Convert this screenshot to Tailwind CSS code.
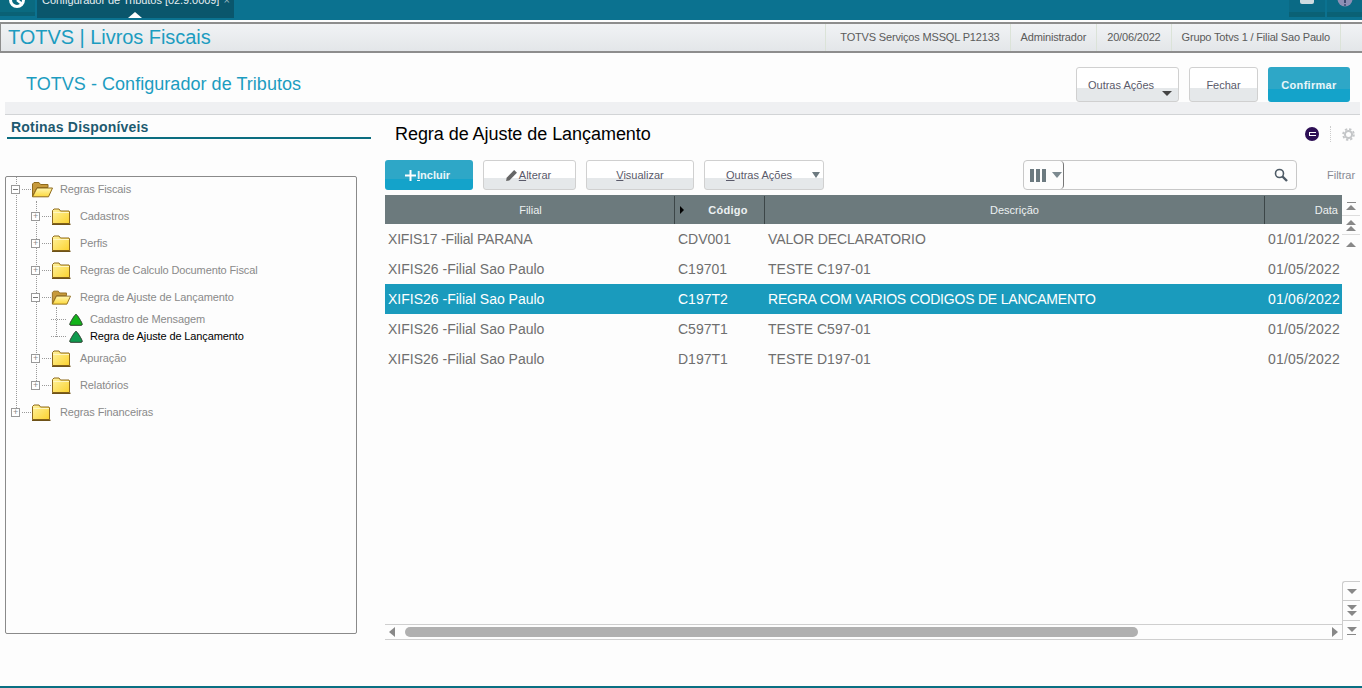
<!DOCTYPE html>
<html lang="pt-BR">
<head>
  <meta charset="UTF-8">
  <title>TOTVS | Livros Fiscais</title>
  <script src="https://cdn.jsdelivr.net/npm/@tailwindcss/browser@4"></script>
</head>
<body class="h-[688px] w-[1362px] overflow-hidden bg-[#fdfdfd] font-['Liberation_Sans',Arial,sans-serif]">
  <svg class="absolute size-0">
    <defs>
      <linearGradient id="fold" x1="0" y1="0" x2="1" y2="1">
        <stop offset="0" stop-color="#fff3a0"/><stop offset="1" stop-color="#fbd22e"/>
      </linearGradient>
      <linearGradient id="flap" x1="0" y1="0" x2="0" y2="1">
        <stop offset="0" stop-color="#fff6b0"/><stop offset="1" stop-color="#fcd83c"/>
      </linearGradient>
      <symbol id="folder-closed" viewBox="0 0 20 17">
        <path d="M1.500 15.500V2.500L3 1h5l1.500 2H18l.5 1v11.500z" fill="url(#fold)" stroke="#8f6a1c"/>
        <path d="M2 4.500H18" stroke="#fff6c0"/>
        <path d="M1 16.300H19.500" stroke="#6e5218" stroke-width="1.400"/>
      </symbol>
      <symbol id="folder-open" viewBox="0 0 22 17">
        <path d="M1.500 15.500V3L3 1.500h5L9.500 3.500H17v3H6z" fill="#c79a3c" stroke="#8f6a1c"/>
        <path d="M1.500 15.800L6 7h15.500l-4 8.800z" fill="url(#flap)" stroke="#8f6a1c"/>
      </symbol>
      <symbol id="tri" viewBox="0 0 14 13">
        <path d="M7 1.200C8 1.200 13.300 10 13.300 11.300Q13.300 12.300 12 12.300H2Q.7 12.300 .7 11.300C.7 10 6 1.200 7 1.200z" fill="currentColor" stroke="#2d3d2d" stroke-linejoin="round"/>
      </symbol>
    </defs>
  </svg>

  <!-- barra superior -->
  <div class="flex h-[20px] items-start justify-between bg-[#0b7290]">
    <div class="flex h-[18px] items-start overflow-hidden">
      <div class="h-[16px] w-[35px] border-b-[4px] border-[#0a6175] bg-[#0a6a80]">
        <svg width="35" height="12" viewBox="0 0 35 12" fill="none" stroke="#fff"><circle cx="17" cy="0" r="6.500" stroke-width="3"/><path d="M17 0l5 4" stroke-width="2.500"/></svg>
      </div>
      <div class="relative ml-[2px] flex h-[18px] w-[197px] bg-[#0a566c] pl-[5px] text-[11px] leading-[14px] text-[#e6eef1]">
        <span class="mt-[-7px] whitespace-nowrap tracking-[-0.05px]">Configurador de Tributos [02.9.0009]</span>
        <span class="mt-[-7px] ml-[4px] text-[#9fb9c2]">×</span>
        <span class="absolute left-[91px] bottom-0 size-0 border-x-[7px] border-b-[6px] border-x-transparent border-b-white"></span>
      </div>
    </div>
    <div class="flex h-[17px] gap-[2px]">
      <div class="flex h-full w-[36px] items-start justify-center border-b-[5px] border-[#0a6175] bg-[#0a6a85]"><span class="h-[4px] w-[14px] rounded-b-[2px] bg-[#cfdbe0]"></span></div>
      <div class="flex h-full w-[35px] items-start justify-center border-b-[5px] border-[#0a6175] bg-[#0a6a85]">
        <svg width="16" height="7" viewBox="0 0 16 7"><circle cx="8" cy="-1" r="7.500" fill="#8d8fb5"/><path d="M8 0v3" stroke="#3d4a70" stroke-width="2"/><circle cx="8" cy="5" r="1" fill="#3d4a70"/></svg>
      </div>
    </div>
  </div>

  <!-- cabecalho do modulo -->
  <div class="mt-[2px] flex h-[31px] items-center justify-between border-2 border-[#8d8d8d] border-l-[1px] border-r-0 bg-[linear-gradient(#f1f3f5,#e3e6e9)] pl-[7px]">
    <div class="mb-[2px] text-[20px] leading-none tracking-[-0.05px] text-[#1c9cc0]">TOTVS | Livros Fiscais</div>
    <div class="flex h-full pr-[21px] text-[11px] tracking-[-0.17px] text-[#5b5b5b]">
      <div class="flex items-center border-x border-[#dbe3d8] pl-[14px] pr-[10px]">TOTVS Serviços MSSQL P12133</div>
      <div class="flex items-center border-r border-[#dbe3d8] px-[10px]">Administrador</div>
      <div class="flex items-center border-r border-[#dbe3d8] px-[10px]">20/06/2022</div>
      <div class="flex items-center border-r border-[#dbe3d8] px-[10px]">Grupo Totvs 1 / Filial Sao Paulo</div>
    </div>
  </div>

  <!-- titulo e acoes -->
  <div class="flex h-[49px] items-end justify-between pl-[26px] pr-[12px]">
    <div class="mb-[6px] text-[18px] leading-[24px] tracking-[0.04px] text-[#1c9cc0]">TOTVS - Configurador de Tributos</div>
    <div class="z-10 flex gap-[10px] text-[11px]">
      <button class="relative h-[35px] w-[103px] rounded-[3px] border border-[#d0d0d0] bg-[linear-gradient(#fff_62%,#e5e8ea_62%)] pr-[13px] pt-[2px] text-[#5a5a6a]">Outras Ações
        <span class="absolute right-[6px] bottom-[5px] size-0 border-x-[5px] border-t-[5px] border-x-transparent border-t-[#444]"></span>
      </button>
      <button class="h-[35px] w-[69px] rounded-[3px] border border-[#d0d0d0] bg-[linear-gradient(#fff_62%,#e5e8ea_62%)] pt-[2px] text-[#5a5a6a]">Fechar</button>
      <button class="h-[35px] w-[82px] rounded-[3px] bg-[linear-gradient(#2ea7c7_62%,#14a3ca_62%)] pt-[2px] font-bold tracking-[0.3px] text-[#e8f6fa]">Confirmar</button>
    </div>
  </div>
  <div class="ml-[5px] h-[13px] w-[1355px] border-b border-[#d2d4d6] bg-[#eff0f2]"></div>

  <div class="flex">
    <!-- rotinas -->
    <aside class="ml-[5px] w-[366px]">
      <div class="ml-[2px] h-[24px] border-b-2 border-[#0b6d80] pl-[4px] pt-[4px] text-[14px] leading-[16px] font-bold tracking-[0.2px] text-[#1d5a70]">Rotinas Disponíveis</div>
      <div class="relative mt-[37px] h-[458px] w-[352px] rounded-[2px] border border-[#8a8a8a] text-[11px] tracking-[-0.12px] text-[#8a8a8a]">
        <span class="absolute left-[10px] top-0 h-[235px] border-l border-dotted border-[#999]"></span>
        <span class="absolute left-[30px] top-[24px] h-[184px] border-l border-dotted border-[#999]"></span>
        <span class="absolute left-[50px] top-[130px] h-[30px] border-l border-dotted border-[#999]"></span>
        <div class="relative mt-[-1px]">
          <div class="flex h-[27px] items-center pl-[5px]">
            <span class="z-10 flex size-[9px] items-center justify-center border border-[#999] bg-white"><span class="h-px w-[5px] bg-[#777]"></span></span>
            <span class="ml-[2px] w-[9px] border-t border-dotted border-[#999]"></span>
            <svg class="h-[17px] w-[22px]"><use href="#folder-open"/></svg>
            <span class="ml-[7px]">Regras Fiscais</span>
          </div>
          <div class="flex h-[27px] items-center pl-[25px]">
            <span class="z-10 flex size-[9px] items-center justify-center border border-[#999] bg-white text-[9px] leading-none">+</span>
            <span class="ml-[2px] w-[9px] border-t border-dotted border-[#999]"></span>
            <svg class="h-[17px] w-[20px]"><use href="#folder-closed"/></svg>
            <span class="ml-[9px]">Cadastros</span>
          </div>
          <div class="flex h-[27px] items-center pl-[25px]">
            <span class="z-10 flex size-[9px] items-center justify-center border border-[#999] bg-white text-[9px] leading-none">+</span>
            <span class="ml-[2px] w-[9px] border-t border-dotted border-[#999]"></span>
            <svg class="h-[17px] w-[20px]"><use href="#folder-closed"/></svg>
            <span class="ml-[9px]">Perfis</span>
          </div>
          <div class="flex h-[27px] items-center pl-[25px]">
            <span class="z-10 flex size-[9px] items-center justify-center border border-[#999] bg-white text-[9px] leading-none">+</span>
            <span class="ml-[2px] w-[9px] border-t border-dotted border-[#999]"></span>
            <svg class="h-[17px] w-[20px]"><use href="#folder-closed"/></svg>
            <span class="ml-[9px]">Regras de Calculo Documento Fiscal</span>
          </div>
          <div class="flex h-[27px] items-center pl-[25px]">
            <span class="z-10 flex size-[9px] items-center justify-center border border-[#999] bg-white"><span class="h-px w-[5px] bg-[#777]"></span></span>
            <span class="ml-[2px] w-[9px] border-t border-dotted border-[#999]"></span>
            <svg class="h-[17px] w-[20px]"><use href="#folder-open"/></svg>
            <span class="ml-[9px]">Regra de Ajuste de Lançamento</span>
          </div>
          <div class="flex h-[17px] items-center pl-[45px]">
            <span class="mr-[3px] w-[15px] border-t border-dotted border-[#999]"></span>
            <svg class="h-[13px] w-[14px] text-[#12b31a]"><use href="#tri"/></svg>
            <span class="ml-[7px]">Cadastro de Mensagem</span>
          </div>
          <div class="flex h-[17px] items-center pl-[45px]">
            <span class="mr-[3px] w-[15px] border-t border-dotted border-[#999]"></span>
            <svg class="h-[13px] w-[14px] text-[#0f9a4e]"><use href="#tri"/></svg>
            <span class="ml-[7px] text-black">Regra de Ajuste de Lançamento</span>
          </div>
          <div class="flex h-[27px] items-center pl-[25px]">
            <span class="z-10 flex size-[9px] items-center justify-center border border-[#999] bg-white text-[9px] leading-none">+</span>
            <span class="ml-[2px] w-[9px] border-t border-dotted border-[#999]"></span>
            <svg class="h-[17px] w-[20px]"><use href="#folder-closed"/></svg>
            <span class="ml-[9px]">Apuração</span>
          </div>
          <div class="flex h-[27px] items-center pl-[25px]">
            <span class="z-10 flex size-[9px] items-center justify-center border border-[#999] bg-white text-[9px] leading-none">+</span>
            <span class="ml-[2px] w-[9px] border-t border-dotted border-[#999]"></span>
            <svg class="h-[17px] w-[20px]"><use href="#folder-closed"/></svg>
            <span class="ml-[9px]">Relatórios</span>
          </div>
          <div class="flex h-[27px] items-center pl-[5px]">
            <span class="z-10 flex size-[9px] items-center justify-center border border-[#999] bg-white text-[9px] leading-none">+</span>
            <span class="ml-[2px] w-[9px] border-t border-dotted border-[#999]"></span>
            <svg class="h-[17px] w-[20px]"><use href="#folder-closed"/></svg>
            <span class="ml-[9px]">Regras Financeiras</span>
          </div>
        </div>
      </div>
    </aside>

    <!-- browse -->
    <section class="ml-[14px] w-[975px]">
      <div class="flex h-[40px] items-center justify-between pb-[2px] pl-[10px]">
        <div class="text-[18px] leading-[24px] tracking-[-0.05px] text-black">Regra de Ajuste de Lançamento</div>
        <div class="flex items-center pr-[5px]">
          <span class="mr-px flex size-[14px] items-center justify-center rounded-full bg-[#2d0f55]"><span class="h-[4px] w-[7px] border-y border-l border-white"></span></span>
          <span class="ml-[10px] h-[16px] border-l border-dotted border-[#ccc]"></span>
          <svg class="ml-[11px]" width="13" height="13" viewBox="0 0 14 14" fill="none" stroke="#c4c6c8"><circle cx="7" cy="7" r="3.800" stroke-width="2.200"/><circle cx="7" cy="7" r="5.800" stroke-width="2" stroke-dasharray="2.500 2.050"/></svg>
        </div>
      </div>

      <div class="mt-[5px] flex h-[30px] items-center text-[11px] text-[#5a5a6a]">
        <button class="flex h-[30px] w-[88px] items-center justify-center rounded-[3px] bg-[linear-gradient(#2ea7c7_62%,#14a3ca_62%)] pr-[3px] font-bold text-[#e8f6fa]"><svg class="mr-[1px]" width="11" height="11" viewBox="0 0 11 11"><path d="M5.500 0v11M0 5.500h11" stroke="#fff" stroke-width="2"/></svg><span><span class="underline">I</span>ncluir</span></button>
        <button class="ml-[10px] flex h-[30px] w-[93px] items-center justify-center rounded-[3px] border border-[#d0d0d0] bg-[linear-gradient(#fff_62%,#e5e8ea_62%)] pr-[3px]">
          <svg class="mr-[1px]" width="13" height="13" viewBox="0 0 12 12"><path d="M1 11l.500-3L8.500 1 11 3.500 4 10.500z" fill="#666"/></svg><span><span class="underline">A</span>lterar</span></button>
        <button class="ml-[10px] h-[30px] w-[108px] rounded-[3px] border border-[#d0d0d0] bg-[linear-gradient(#fff_62%,#e5e8ea_62%)]"><span class="underline">V</span>isualizar</button>
        <button class="relative ml-[10px] h-[30px] w-[120px] rounded-[3px] border border-[#d0d0d0] bg-[linear-gradient(#fff_62%,#e5e8ea_62%)] pr-[10px]"><span class="underline">O</span>utras Ações
          <span class="absolute right-[3px] top-[11px] size-0 border-x-[4px] border-t-[6px] border-x-transparent border-t-[#6d7a80]"></span>
        </button>
        <div class="ml-[199px] flex h-[30px] w-[274px] rounded-[4px] border border-[#c8c8c8]">
          <div class="flex w-[40px] items-center rounded-[4px] border-r border-[#777] pl-[6px]">
            <span class="h-[13px] w-[4px] bg-[#6c7a80]"></span><span class="ml-[2px] h-[13px] w-[4px] bg-[#6c7a80]"></span><span class="ml-[2px] h-[13px] w-[4px] bg-[#6c7a80]"></span>
            <span class="ml-[6px] size-0 border-x-[5px] border-t-[6px] border-x-transparent border-t-[#7c8a90]"></span>
          </div>
          <div class="flex flex-1 items-center justify-end pr-[8px]">
            <svg width="14" height="14" viewBox="0 0 14 14" fill="none" stroke="#4e5b66"><circle cx="5.500" cy="5.500" r="4" stroke-width="1.600"/><path d="M8.500 8.500L13 13" stroke-width="2.400"/></svg>
          </div>
        </div>
        <span class="ml-[30px] text-[#888a94]">Filtrar</span>
      </div>

      <div class="mt-[5px] flex h-[445px]">
        <div class="flex w-[957px] flex-col">
          <div class="flex h-[29px] bg-[#6c7a7d] pt-px text-[11px] text-[#edf1f2]">
            <div class="flex w-[290px] items-center justify-center border-r border-[#3c4648] pl-[2px]">Filial</div>
            <div class="relative flex w-[90px] items-center justify-center border-r border-[#3c4648] pl-[17px] font-bold tracking-[0.3px]">
              <span class="absolute left-[5px] size-0 border-y-[4px] border-l-[4px] border-y-transparent border-l-black"></span>Código
            </div>
            <div class="flex w-[500px] items-center justify-center border-r border-[#3c4648]">Descrição</div>
            <div class="flex flex-1 items-center justify-end pr-[4px]">Data</div>
          </div>
          <div class="flex-1 text-[14px] text-[#6f6f6f]">
            <div class="flex h-[30px] items-center"><span class="w-[290px] pl-[3px] tracking-[-0.18px]">XIFIS17 -Filial PARANA</span><span class="w-[90px] pl-[3px]">CDV001</span><span class="w-[500px] pl-[3px] tracking-[-0.1px]">VALOR DECLARATORIO</span><span class="pl-[3px] tracking-[0.2px]">01/01/2022</span></div>
            <div class="flex h-[30px] items-center"><span class="w-[290px] pl-[3px]">XIFIS26 -Filial Sao Paulo</span><span class="w-[90px] pl-[3px]">C19701</span><span class="w-[500px] pl-[3px]">TESTE C197-01</span><span class="pl-[3px] tracking-[0.2px]">01/05/2022</span></div>
            <div class="flex h-[30px] items-center bg-[#1a9bbd] text-white"><span class="w-[290px] pl-[3px]">XIFIS26 -Filial Sao Paulo</span><span class="w-[90px] pl-[3px]">C197T2</span><span class="w-[500px] pl-[3px] tracking-[-0.21px]">REGRA COM VARIOS CODIGOS DE LANCAMENTO</span><span class="pl-[3px] tracking-[0.2px]">01/06/2022</span></div>
            <div class="flex h-[30px] items-center"><span class="w-[290px] pl-[3px]">XIFIS26 -Filial Sao Paulo</span><span class="w-[90px] pl-[3px]">C597T1</span><span class="w-[500px] pl-[3px]">TESTE C597-01</span><span class="pl-[3px] tracking-[0.2px]">01/05/2022</span></div>
            <div class="flex h-[30px] items-center"><span class="w-[290px] pl-[3px]">XIFIS26 -Filial Sao Paulo</span><span class="w-[90px] pl-[3px]">D197T1</span><span class="w-[500px] pl-[3px]">TESTE D197-01</span><span class="pl-[3px] tracking-[0.2px]">01/05/2022</span></div>
          </div>
          <div class="flex h-[16px] items-center border-y border-[#cfcfcf] pl-[4px] pr-[4px]">
            <span class="size-0 border-y-[5px] border-r-[6px] border-y-transparent border-r-[#888]"></span>
            <span class="ml-[10px] h-[10px] w-[733px] rounded-[5px] bg-[#b0b0b0]"></span>
            <span class="ml-auto size-0 border-y-[5px] border-l-[6px] border-y-transparent border-l-[#888]"></span>
          </div>
        </div>
        <div class="flex w-[18px] flex-col justify-between pt-[2px] text-[#888]">
          <div class="flex flex-col">
            <div class="flex h-[19px] flex-col items-center justify-center border-b border-[#ddd]"><span class="mb-[2px] h-px w-[9px] bg-[#888]"></span><span class="size-0 border-x-[5px] border-b-[5px] border-x-transparent border-b-[#888]"></span></div>
            <div class="flex h-[19px] flex-col items-center justify-center border-b border-[#ddd]"><span class="size-0 border-x-[5px] border-b-[5px] border-x-transparent border-b-[#888]"></span><span class="mt-[1px] size-0 border-x-[5px] border-b-[5px] border-x-transparent border-b-[#888]"></span></div>
            <div class="flex h-[19px] flex-col items-center justify-center"><span class="size-0 border-x-[5px] border-b-[5px] border-x-transparent border-b-[#888]"></span></div>
          </div>
          <div class="flex flex-col">
            <div class="flex h-[20px] flex-col items-center justify-center rounded-tl-[3px] border-y border-l border-[#ccc]"><span class="size-0 border-x-[5px] border-t-[5px] border-x-transparent border-t-[#888]"></span></div>
            <div class="flex h-[20px] flex-col items-center justify-center border-b border-l border-[#ccc]"><span class="size-0 border-x-[5px] border-t-[5px] border-x-transparent border-t-[#888]"></span><span class="mt-[1px] size-0 border-x-[5px] border-t-[5px] border-x-transparent border-t-[#888]"></span></div>
            <div class="flex h-[19px] flex-col items-center justify-center border-l border-[#ccc]"><span class="size-0 border-x-[5px] border-t-[5px] border-x-transparent border-t-[#888]"></span><span class="mt-[2px] h-px w-[9px] bg-[#888]"></span></div>
          </div>
        </div>
      </div>
    </section>
  </div>
  <div class="fixed bottom-0 h-[2px] w-full bg-[#0a7083]"></div>
</body>
</html>
